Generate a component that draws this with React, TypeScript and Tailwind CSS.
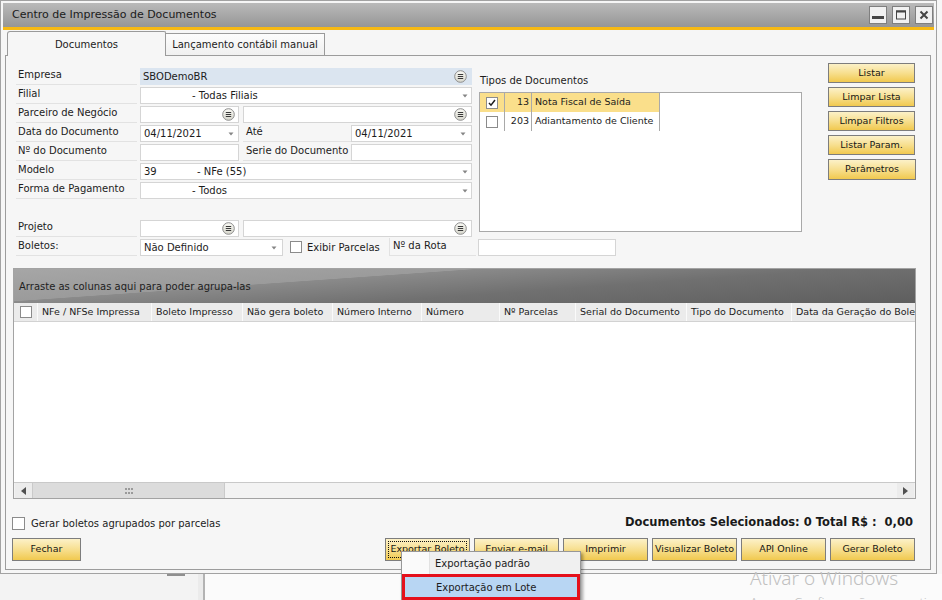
import React from "react";

const ListIcon = () => (
  <svg width="13" height="13" viewBox="0 0 13 13" className="shrink-0">
    <defs>
      <linearGradient id="liG" x1="0" y1="0" x2="0" y2="1">
        <stop offset="0" stopColor="#fbfbf6" />
        <stop offset="1" stopColor="#d6d6cc" />
      </linearGradient>
    </defs>
    <circle cx="6.5" cy="6.5" r="5.8" fill="url(#liG)" stroke="#8c8c8c" strokeWidth="1" />
    <path d="M3.8 4.5h5.4M3.8 6.5h5.4M3.8 8.5h5.4" stroke="#3a3a3a" strokeWidth="1" />
  </svg>
);

const Arrow = () => (
  <svg width="6" height="4" viewBox="0 0 6 4" className="shrink-0">
    <path d="M0.5 0.5h5L3 3.5z" fill="#858585" />
  </svg>
);

const Check = ({ checked = false, big = false }: { checked?: boolean; big?: boolean }) => (
  <div
    className={`${big ? "w-[13px] h-[13px]" : "w-[12px] h-[12px]"} shrink-0 border border-[#8b8b8b] bg-white flex items-center justify-center`}
  >
    {checked && (
      <svg width="8" height="8" viewBox="0 0 8 8">
        <path d="M1 4l2 2.2L7 1" stroke="#1e1e1e" strokeWidth="1.5" fill="none" />
      </svg>
    )}
  </div>
);

const YBtn = ({
  children,
  w,
  h,
  focus = false,
}: {
  children: React.ReactNode;
  w: string;
  h: string;
  focus?: boolean;
}) => (
  <div
    className={`${w} ${h} relative shrink-0 border border-[#7d7d7d] bg-[linear-gradient(180deg,#fcf1c8_0%,#f7df8f_50%,#f1c94f_100%)] flex items-center justify-center text-[9.5px] text-[#161616] whitespace-nowrap`}
  >
    {focus && <div className="absolute inset-[2px] border border-dotted border-[#111]" />}
    {children}
  </div>
);

const Label = ({ children, w }: { children?: React.ReactNode; w: string }) => (
  <div className={`${w} h-[18px] shrink-0 border-b border-[#e2e2e2] flex items-center pb-[2px] text-[10px] whitespace-nowrap`}>
    {children}
  </div>
);

const Row = ({ label, children }: { label: string; children?: React.ReactNode }) => (
  <div className="h-[19px] flex shrink-0">
    <Label w="w-[121px] pl-[2px]">{label}</Label>
    <div className="ml-[3px] flex pt-[1px]">{children}</div>
  </div>
);

const Field = ({
  w,
  children,
  right,
  blue = false,
}: {
  w: string;
  children?: React.ReactNode;
  right?: React.ReactNode;
  blue?: boolean;
}) => (
  <div
    className={`${w} h-[17px] shrink-0 flex items-center text-[10px] whitespace-nowrap ${
      blue ? "bg-[#dbe5f0]" : "bg-white border border-[#d5d5d5]"
    }`}
  >
    <div className="flex-1 flex items-center overflow-hidden">{children}</div>
    {right}
  </div>
);

const TipoRow = ({ checked, num, text, sel }: { checked: boolean; num: string; text: string; sel: boolean }) => (
  <div className="h-[19px] flex text-[9.5px]">
    <div className={`w-[25px] h-full flex items-center justify-center border-r border-[#a9a9a9] ${sel ? "bg-[#fadf8b]" : ""}`}>
      <Check checked={checked} />
    </div>
    <div className={`w-[27px] h-full flex items-center justify-end pr-[2px] border-r border-[#a9a9a9] ${sel ? "bg-[#fadf8b]" : ""}`}>
      {num}
    </div>
    <div className={`w-[128px] h-full flex items-center pl-[3px] border-r border-[#a9a9a9] whitespace-nowrap ${sel ? "bg-[#fadf8b]" : ""}`}>
      {text}
    </div>
  </div>
);

const cols: [string, string][] = [
  ["w-[114px]", "NFe / NFSe Impressa"],
  ["w-[91px]", "Boleto Impresso"],
  ["w-[90px]", "Não gera boleto"],
  ["w-[89px]", "Número Interno"],
  ["w-[78px]", "Número"],
  ["w-[76px]", "Nº Parcelas"],
  ["w-[111px]", "Serial do Documento"],
  ["w-[105px]", "Tipo do Documento"],
];

const WinBtn = ({ children }: { children: React.ReactNode }) => (
  <div className="w-[18px] h-[18px] border border-[#7f7f7f] bg-[#f1f1f1] flex items-center justify-center">{children}</div>
);

function Panel() {
  return (
    <div className="ml-[2px] w-[926px] h-[515px] border border-[#9c9c9c] flex flex-col">
      {/* top form */}
      <div className="h-[212px] flex pt-[7px] pl-[10px] shrink-0">
        <div className="w-[456px] mt-[4px] flex flex-col shrink-0">
          <Row label="Empresa">
            <Field w="w-[332px]" blue right={<div className="pr-[5px] flex"><ListIcon /></div>}>
              <span className="pl-[3px]">SBODemoBR</span>
            </Field>
          </Row>
          <Row label="Filial">
            <Field w="w-[332px]" right={<div className="pr-[3px] flex"><Arrow /></div>}>
              <span className="pl-[51px]">- Todas Filiais</span>
            </Field>
          </Row>
          <Row label="Parceiro de Negócio">
            <Field w="w-[99px]" right={<div className="pr-[3px] flex"><ListIcon /></div>} />
            <div className="ml-[4px]">
              <Field w="w-[229px]" right={<div className="pr-[4px] flex"><ListIcon /></div>} />
            </div>
          </Row>
          <Row label="Data do Documento">
            <Field w="w-[99px]" right={<div className="pr-[4px] flex"><Arrow /></div>}>
              <span className="pl-[3px]">04/11/2021</span>
            </Field>
            <div className="ml-[4px] -mt-[1px]">
              <Label w="w-[108px] pl-[3px]">Até</Label>
            </div>
            <Field w="w-[121px]" right={<div className="pr-[5px] flex"><Arrow /></div>}>
              <span className="pl-[3px]">04/11/2021</span>
            </Field>
          </Row>
          <Row label="Nº do Documento">
            <Field w="w-[99px]" />
            <div className="ml-[4px] -mt-[1px]">
              <Label w="w-[108px] pl-[3px]">Serie do Documento</Label>
            </div>
            <Field w="w-[121px]" />
          </Row>
          <Row label="Modelo">
            <Field w="w-[332px]" right={<div className="pr-[3px] flex"><Arrow /></div>}>
              <span className="pl-[3px] w-[56px] shrink-0">39</span>
              <span>- NFe (55)</span>
            </Field>
          </Row>
          <Row label="Forma de Pagamento">
            <Field w="w-[332px]" right={<div className="pr-[3px] flex"><Arrow /></div>}>
              <span className="pl-[51px]">- Todos</span>
            </Field>
          </Row>
          <div className="h-[19px] shrink-0" />
          <Row label="Projeto">
            <Field w="w-[99px]" right={<div className="pr-[3px] flex"><ListIcon /></div>} />
            <div className="ml-[4px]">
              <Field w="w-[229px]" right={<div className="pr-[4px] flex"><ListIcon /></div>} />
            </div>
          </Row>
          <Row label="Boletos:">
            <Field w="w-[143px]" right={<div className="pr-[5px] flex"><Arrow /></div>}>
              <span className="pl-[3px]">Não Definido</span>
            </Field>
            <div className="ml-[7px] pt-[2px]">
              <Check />
            </div>
            <div className="ml-[5px] w-[82px] h-[17px] flex items-center text-[10px] whitespace-nowrap">Exibir Parcelas</div>
            <div className="-mt-[1px]">
              <Label w="w-[87px] pl-[3px] border-l">Nº da Rota</Label>
            </div>
            <div className="ml-[2px]">
              <Field w="w-[138px]" />
            </div>
          </Row>
        </div>

        <div className="ml-[7px] w-[323px] mt-[4px] shrink-0 flex flex-col">
          <div className="h-[25px] flex items-center pt-[1px] pl-[1px] text-[10px]">Tipos de Documentos</div>
          <div className="h-[140px] border border-[#a9a9a9] bg-white">
            <TipoRow checked num="13" text="Nota Fiscal de Saída" sel />
            <TipoRow checked={false} num="203" text="Adiantamento de Cliente" sel={false} />
          </div>
        </div>

        <div className="ml-[26px] flex flex-col gap-[4px] shrink-0">
          <YBtn w="w-[87px]" h="h-[20px]">Listar</YBtn>
          <YBtn w="w-[87px]" h="h-[20px]">Limpar Lista</YBtn>
          <YBtn w="w-[87px]" h="h-[20px]">Limpar Filtros</YBtn>
          <YBtn w="w-[87px]" h="h-[20px]">Listar Param.</YBtn>
          <YBtn w="w-[88px]" h="h-[21px]">Parâmetros</YBtn>
        </div>
      </div>

      {/* grid */}
      <div className="ml-[7px] w-[903px] h-[231px] border border-[#a3a3a3] flex flex-col shrink-0">
        <div className="h-[34px] shrink-0 bg-[linear-gradient(176deg,#a6a6a6_0%,#9b9b9b_33%,#8a8a8a_33.6%,#707070_60%,#5e5e5e_100%)] flex items-center pl-[5px] text-[10px] text-[#1e1e1e]">
          Arraste as colunas aqui para poder agrupa-las
        </div>
        <div className="h-[19px] shrink-0 bg-[#ebebeb] flex border-b border-[#d2d2d2] text-[9.5px]">
          <div className="w-[24px] h-full flex items-center justify-center border-r border-[#fafafa]">
            <Check />
          </div>
          {cols.map(([w, t]) => (
            <div key={t} className={`${w} h-full shrink-0 flex items-center pl-[4px] border-r border-[#fafafa] whitespace-nowrap overflow-hidden`}>
              {t}
            </div>
          ))}
          <div className="flex-1 h-full flex items-center pl-[4px] whitespace-nowrap overflow-hidden">Data da Geração do Boleto</div>
        </div>
        <div className="flex-1 bg-white" />
        <div className="h-[16px] shrink-0 flex bg-[#f3f3f3] border-t border-[#c9c9c9] px-[1px]">
          <div className="w-[17px] h-full bg-[#ececec] flex items-center justify-center">
            <svg width="5" height="8" viewBox="0 0 5 8">
              <path d="M5 0v8L0 4z" fill="#505050" />
            </svg>
          </div>
          <div className="w-[193px] h-full bg-[#dcdcdc] border-x border-[#cacaca] flex items-center justify-center">
            <svg width="8" height="6" viewBox="0 0 8 6">
              <g fill="#9a9a9a">
                <rect x="0" y="0" width="2" height="2" />
                <rect x="3" y="0" width="2" height="2" />
                <rect x="6" y="0" width="2" height="2" />
                <rect x="0" y="4" width="2" height="2" />
                <rect x="3" y="4" width="2" height="2" />
                <rect x="6" y="4" width="2" height="2" />
              </g>
            </svg>
          </div>
          <div className="flex-1 h-full" />
          <div className="w-[17px] h-full bg-[#ececec] flex items-center justify-center">
            <svg width="5" height="8" viewBox="0 0 5 8">
              <path d="M0 0v8L5 4z" fill="#505050" />
            </svg>
          </div>
        </div>
      </div>

      {/* bottom */}
      <div className="mt-[17px] h-[14px] flex items-center pl-[6px] pr-[17px] shrink-0">
        <Check big />
        <span className="ml-[6px] text-[10px]">Gerar boletos agrupados por parcelas</span>
        <span className="ml-auto font-bold text-[11.5px] whitespace-pre text-[#1a1a1a]">
          {"Documentos Selecionados: 0 Total R$ :  0,00"}
        </span>
      </div>
      <div className="mt-[8px] h-[23px] flex pl-[6px] pr-[15px] shrink-0">
        <YBtn w="w-[69px]" h="h-[23px]">Fechar</YBtn>
        <div className="ml-auto flex gap-[4px]">
          <YBtn w="w-[85px]" h="h-[23px]" focus>Exportar Boleto</YBtn>
          <YBtn w="w-[85px]" h="h-[23px]">Enviar e-mail</YBtn>
          <YBtn w="w-[85px]" h="h-[23px]">Imprimir</YBtn>
          <YBtn w="w-[85px]" h="h-[23px]">Visualizar Boleto</YBtn>
          <YBtn w="w-[85px]" h="h-[23px]">API Online</YBtn>
          <YBtn w="w-[85px]" h="h-[23px]">Gerar Boleto</YBtn>
        </div>
      </div>
    </div>
  );
}

function Window() {
  return (
    <div className="w-[937px] h-[574px] shrink-0 border border-[#a2a2a2] bg-[#f6f6f6] p-[2px] flex flex-col">
      <div className="h-[24px] shrink-0 bg-[linear-gradient(180deg,#bababa,#969696)] flex items-center pl-[9px] pr-[1px]">
        <span className="text-[11px] text-[#1b1b1b]">Centro de Impressão de Documentos</span>
        <div className="ml-auto flex gap-[5px]">
          <WinBtn>
            <svg width="14" height="14" viewBox="0 0 14 14">
              <rect x="1" y="8" width="12" height="3" fill="#454545" />
            </svg>
          </WinBtn>
          <WinBtn>
            <svg width="14" height="14" viewBox="0 0 14 14">
              <rect x="2.5" y="3" width="9" height="8" fill="none" stroke="#454545" strokeWidth="1" />
              <rect x="2" y="2.5" width="10" height="2" fill="#454545" />
            </svg>
          </WinBtn>
          <WinBtn>
            <svg width="14" height="14" viewBox="0 0 14 14">
              <path d="M3.5 3.5l7 7M10.5 3.5l-7 7" stroke="#454545" strokeWidth="2" />
            </svg>
          </WinBtn>
        </div>
      </div>
      <div className="h-[3px] shrink-0 bg-[#f6b914]" />
      <div className="h-[25px] shrink-0 flex items-end pl-[4px]">
        <div className="w-[159px] h-[25px] -mb-[1px] relative z-10 border border-b-0 border-[#9a9a9a] bg-[#f6f6f6] rounded-tl-[3px] rounded-tr-[2px] flex items-center justify-center text-[10px]">
          Documentos
        </div>
        <div className="w-[159px] h-[22px] border border-b-0 border-l-0 border-[#9a9a9a] bg-[linear-gradient(180deg,#fcfcfc,#f0f0f0)] flex items-center justify-center text-[10px] pb-[1px]">
          Lançamento contábil manual
        </div>
      </div>
      <Panel />
    </div>
  );
}

export default function App() {
  return (
    <div className="w-[942px] h-[600px] relative overflow-hidden bg-[#fafafa] font-['DejaVu_Sans',sans-serif] text-[#1c1c1c]">
      <div className="flex">
        <Window />
        <div className="w-[5px] h-[574px] bg-[#f7f7f7]" />
      </div>
      <div className="h-[26px] flex">
        <div className="w-[198px] h-full bg-[#f3f3f3]">
          <div className="ml-[167px] w-[18px] h-[2px] bg-[#8f8f8f]" />
        </div>
        <div className="w-[5px] h-full bg-[#ebebeb]" />
        <div className="w-[2px] h-full bg-[#b3b3b3]" />
        <div className="flex-1 h-full bg-[#fbfbfb]" />
      </div>

      {/* dropdown menu */}
      <div className="absolute left-[401px] top-[551px] w-[180px] h-[52px] border border-[#979797] bg-[#f0f0f0] shadow-[2px_2px_3px_rgba(0,0,0,0.35)] flex flex-col">
        <div className="h-[22px] flex shrink-0">
          <div className="w-[28px] h-full bg-[#fafafa] border-r border-[#e2e2e2]" />
          <div className="flex items-center pl-[5px] text-[10px] whitespace-nowrap">Exportação padrão</div>
        </div>
        <div className="h-[26px] shrink-0 border-[3px] border-[#e5101b] bg-[#b8d6f3] flex items-center pl-[31px] text-[10px] whitespace-nowrap">
          Exportação em Lote
        </div>
      </div>

      {/* watermark */}
      <div className="absolute left-[750px] top-[569px] text-[#c0c0c0] font-['Noto_Sans',sans-serif] font-light leading-none whitespace-nowrap">
        <div className="text-[19px]">Ativar o Windows</div>
        <div className="text-[13px] mt-[8px]">Acesse Configurações para ativar o Windows.</div>
      </div>
    </div>
  );
}
